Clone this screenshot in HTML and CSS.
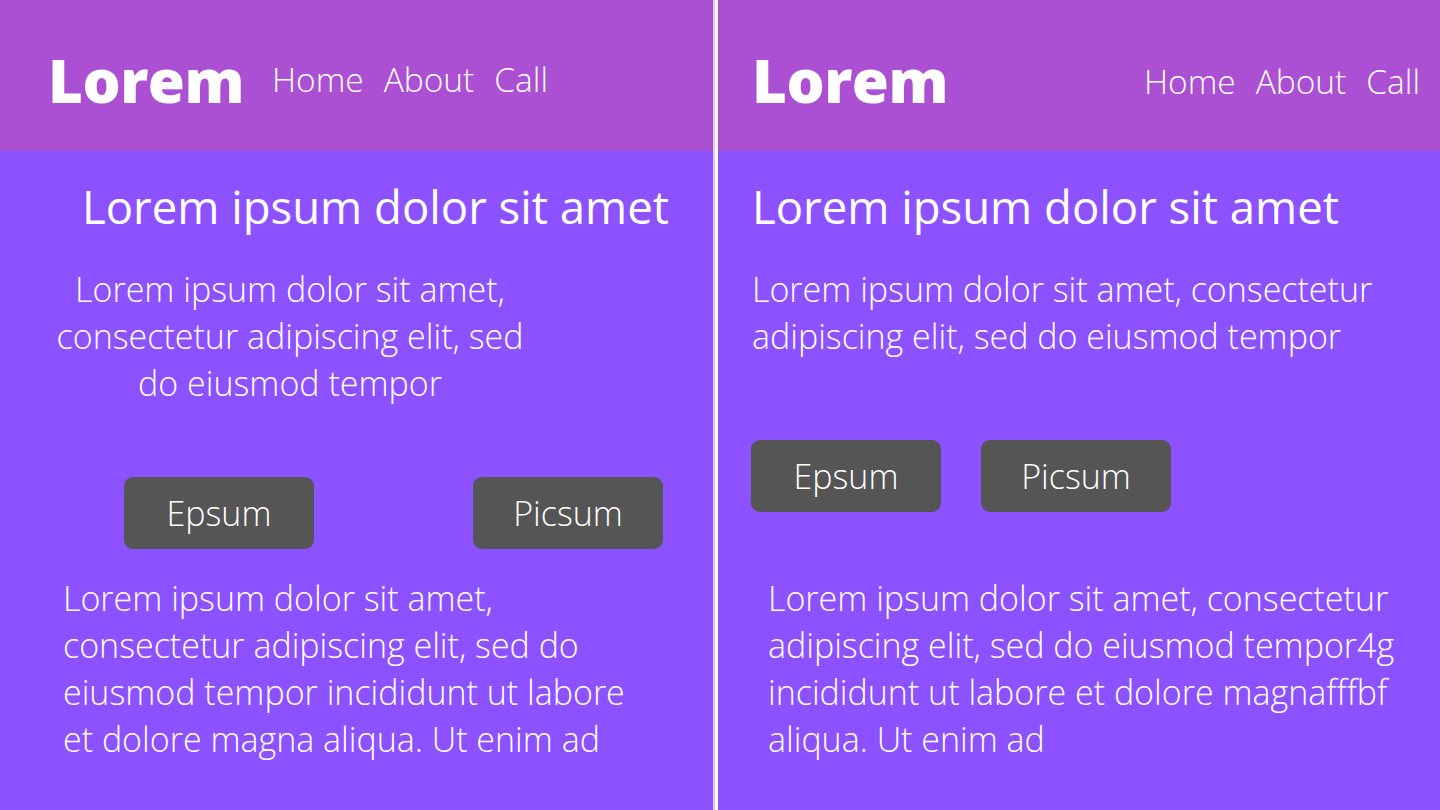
FILE: index.html
```html
<!DOCTYPE html>
<html lang="en">
<head>
<meta charset="utf-8">
<title>Lorem</title>
<link rel="stylesheet" href="styles.css">
</head>
<body>
<div class="screens">
  <section class="panel panel-narrow">
    <header class="header header-narrow">
      <div class="logo">Lorem</div>
      <nav class="nav">
        <a href="#">Home</a>
        <a href="#">About</a>
        <a href="#">Call</a>
      </nav>
    </header>
    <main class="content content-narrow">
      <h1 class="title">Lorem ipsum dolor sit amet</h1>
      <p class="lead">Lorem ipsum dolor sit amet, consectetur adipiscing elit, sed do eiusmod tempor</p>
      <div class="buttons">
        <button class="btn">Epsum</button>
        <button class="btn">Picsum</button>
      </div>
      <p class="body-text">Lorem ipsum dolor sit amet, consectetur adipiscing elit, sed do eiusmod tempor incididunt ut labore et dolore magna aliqua. Ut enim ad</p>
    </main>
  </section>
  <div class="divider"></div>
  <section class="panel panel-wide">
    <header class="header header-wide">
      <div class="logo">Lorem</div>
      <nav class="nav">
        <a href="#">Home</a>
        <a href="#">About</a>
        <a href="#">Call</a>
      </nav>
    </header>
    <main class="content content-wide">
      <h1 class="title">Lorem ipsum dolor sit amet</h1>
      <p class="lead">Lorem ipsum dolor sit amet, consectetur adipiscing elit, sed do eiusmod tempor</p>
      <div class="buttons">
        <button class="btn">Epsum</button>
        <button class="btn">Picsum</button>
      </div>
      <p class="body-text">Lorem ipsum dolor sit amet, consectetur adipiscing elit, sed do eiusmod tempor4g incididunt ut labore et dolore magnafffbf aliqua. Ut enim ad</p>
    </main>
  </section>
</div>
</body>
</html>
```

FILE: styles.css
```css
* { box-sizing: border-box; }

html, body {
  margin: 0;
  padding: 0;
  height: 100%;
  overflow: hidden;
}

body {
  font-family: "Open Sans", "Noto Sans", sans-serif;
  color: #ffffff;
  background: #8c52ff;
}

.screens {
  display: flex;
  height: 810px;
}

.panel {
  background: #8c52ff;
  display: flex;
  flex-direction: column;
}

.panel-narrow { width: 713px; }
.panel-wide { flex: 1; }

.divider {
  width: 5px;
  background: linear-gradient(to right, #dcc8ff 0, #dcc8ff 2px, #ffffff 2px, #ffffff 100%);
}

.header {
  height: 151px;
  background: #ab4fd3;
  display: flex;
  align-items: center;
}

.header-narrow {
  padding-left: 48px;
  gap: 28px;
}

.header-wide {
  padding: 0 20px 0 34px;
  justify-content: space-between;
}

.logo {
  font-size: 60px;
  font-weight: 800;
  line-height: 1;
  letter-spacing: -0.5px;
  margin-top: 9px;
}

.nav {
  display: flex;
  gap: 20px;
  padding-top: 8px;
}

.header-wide .nav { padding-top: 12px; }

.nav a {
  color: #ffffff;
  text-decoration: none;
  font-size: 33.5px;
  font-weight: 300;
  line-height: 1;
}

.content {
  display: flex;
  flex-direction: column;
}

.title {
  margin: 25px 0 0;
  font-size: 45.5px;
  font-weight: 400;
  line-height: 60px;
}

.lead {
  margin: 30px 0 0;
  font-size: 34px;
  font-weight: 300;
  line-height: 47px;
}

.buttons {
  display: flex;
}

.btn {
  width: 190px;
  height: 72px;
  border: 0;
  border-radius: 9px;
  background: #555555;
  color: #ffffff;
  font-family: inherit;
  font-size: 34px;
  font-weight: 300;
  padding: 0;
}

.body-text {
  margin: 0;
  font-size: 34px;
  font-weight: 300;
  line-height: 47px;
}

/* narrow (left) layout */
.content-narrow .title { padding-left: 82px; }
.content-narrow .lead {
  width: 500px;
  margin-left: 40px;
  text-align: center;
}
.content-narrow .buttons {
  margin-top: 70px;
  padding-left: 124px;
  gap: 159px;
}
.content-narrow .body-text {
  margin-top: 26px;
  margin-left: 63px;
  width: 590px;
}

/* wide (right) layout */
.content-wide .title { padding-left: 34px; }
.content-wide .lead {
  padding-left: 34px;
  width: 680px;
}
.content-wide .buttons {
  margin-top: 80px;
  padding-left: 33px;
  gap: 40px;
}
.content-wide .body-text {
  margin-top: 63px;
  margin-left: 50px;
  width: 670px;
}
```
